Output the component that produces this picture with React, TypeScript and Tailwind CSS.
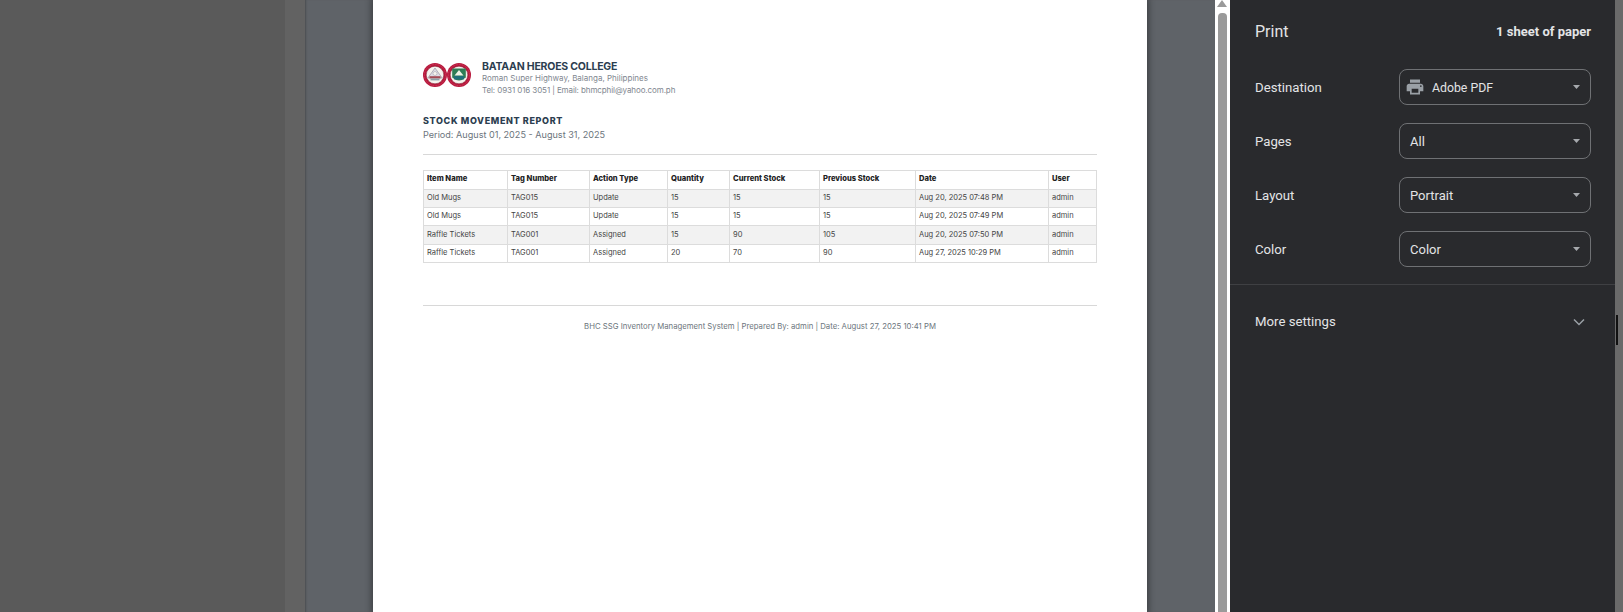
import React from "react";

const rows = [
  ["Old Mugs", "TAG015", "Update", "15", "15", "15", "Aug 20, 2025 07:48 PM", "admin"],
  ["Old Mugs", "TAG015", "Update", "15", "15", "15", "Aug 20, 2025 07:49 PM", "admin"],
  ["Raffle Tickets", "TAG001", "Assigned", "15", "90", "105", "Aug 20, 2025 07:50 PM", "admin"],
  ["Raffle Tickets", "TAG001", "Assigned", "20", "70", "90", "Aug 27, 2025 10:29 PM", "admin"],
];
const heads = ["Item Name", "Tag Number", "Action Type", "Quantity", "Current Stock", "Previous Stock", "Date", "User"];
const rowHeights = ["h-[18px]", "h-[18px]", "h-[19px]", "h-[18px]"];

function Seal({ variant }: { variant: 0 | 1 }) {
  return (
    <svg width="24" height="24" viewBox="0 0 24 24" className="shrink-0">
      <circle cx="12" cy="12" r="12" fill="#b8183c" />
      <circle cx="12" cy="12" r="10.6" fill="none" stroke="#d9677f" strokeWidth="0.5" strokeDasharray="0.8 0.8" />
      <circle cx="12" cy="12" r="8.8" fill="#f6f3ee" stroke="#7d1f30" strokeWidth="0.5" />
      {variant === 0 ? (
        <>
          <path d="M4.8 15 L12 5 L19.2 15 Z" fill="#dedbe4" stroke="#8b8a99" strokeWidth="0.6" />
          <circle cx="12" cy="10.5" r="2" fill="#f6f3ee" stroke="#8a8a99" strokeWidth="0.4" />
          <rect x="6.5" y="13.2" width="11" height="2.2" fill="#a34a55" />
          <rect x="7.5" y="15.6" width="9" height="1.8" fill="#8ba0a8" />
        </>
      ) : (
        <>
          <path d="M5.2 5.6 H18.8 V14.5 Q12 20.5 5.2 14.5 Z" fill="#2e7d55" />
          <path d="M7.5 12.5 L12 7 L16.5 12.5 Z" fill="#eef2e6" />
          <rect x="7" y="13" width="10" height="3.4" fill="#1f6f7a" />
        </>
      )}
    </svg>
  );
}

function Caret() {
  return (
    <svg width="7" height="4" viewBox="0 0 7 4" className="shrink-0">
      <path d="M0 0 H7 L3.5 4 Z" fill="#a6a9ad" />
    </svg>
  );
}

function Setting({ label, value, icon }: { label: string; value: string; icon?: boolean }) {
  return (
    <div className="flex h-[36px] items-center justify-between">
      <span className="pt-[2px] text-[13.2px] text-[#e3e4e6]">{label}</span>
      <div className={`flex h-[36px] w-[192px] items-center rounded-[8px] border border-[#6f7174] pr-[10px] ${icon ? "pl-[5px]" : "pl-[10px]"}`}>
        {icon && (
          <svg width="20" height="20" viewBox="0 0 24 24" className="mr-[7px] shrink-0">
            <path
              d="M19 8H5c-1.66 0-3 1.34-3 3v6h4v4h12v-4h4v-6c0-1.66-1.34-3-3-3zm-3 11H8v-5h8v5zm3-7c-.55 0-1-.45-1-1s.45-1 1-1 1 .45 1 1-.45 1-1 1zm-1-9H6v4h12V3z"
              fill="#9aa0a6"
            />
          </svg>
        )}
        <span className={`flex-1 text-[#e3e4e6] ${icon ? "pt-[3px] text-[12.3px]" : "pt-[1px] text-[13px]"}`}>{value}</span>
        <Caret />
      </div>
    </div>
  );
}

export default function App() {
  return (
    <div className="relative flex h-[612px] w-[1623px] overflow-hidden bg-[#5a5a5a] font-['Roboto',sans-serif]">
      <div className="h-full w-[285px] bg-[#5a5a5a]" />
      <div className="h-full w-[20px] bg-[#626262]" />
      <div className="flex h-full w-[910px] justify-start bg-[#5f6368] pl-[68px] shadow-[inset_2px_0_2px_-1px_#4a4c50]">
        <div className="h-full w-[774px] bg-white px-[50px] pt-[58px] font-['Inter',sans-serif] shadow-[0_0_6px_2px_rgba(0,0,0,0.35)]">
          <div className="flex items-start">
            <div className="mt-[5px] flex">
              <Seal variant={0} />
              <Seal variant={1} />
            </div>
            <div className="ml-[11px]">
              <div className="pt-[3px] text-[10.5px] leading-[11px] font-bold tracking-[-0.02em] text-[#2c3e50]">BATAAN HEROES COLLEGE</div>
              <div className="text-[8px] leading-[12px] text-[#7f8790]">Roman Super Highway, Balanga, Philippines</div>
              <div className="text-[8px] leading-[12px] tracking-[-0.012em] text-[#7f8790]">Tel: 0931 016 3051 | Email: bhmcphil@yahoo.com.ph</div>
            </div>
          </div>
          <div className="mt-[18px] text-[9px] leading-[13px] font-extrabold tracking-[0.07em] text-[#2c3e50]">STOCK MOVEMENT REPORT</div>
          <div className="mt-[1px] text-[9.1px] leading-[14px] text-[#6c757d]">Period: August 01, 2025 - August 31, 2025</div>
          <div className="mt-[12px] h-px w-[674px] bg-[#d8d8d8]" />
          <table className="mt-[15px] w-[674px] table-fixed border-collapse">
            <colgroup>
              <col className="w-[84px]" />
              <col className="w-[82px]" />
              <col className="w-[78px]" />
              <col className="w-[62px]" />
              <col className="w-[90px]" />
              <col className="w-[96px]" />
              <col className="w-[133px]" />
              <col className="w-[48px]" />
            </colgroup>
            <thead>
              <tr className="h-[19px]">
                {heads.map((h) => (
                  <th key={h} className="border border-[#dcdcdc] px-[3px] pt-0 pb-[2px] text-left align-middle text-[7.6px] leading-[10px] font-extrabold text-[#222]">
                    {h}
                  </th>
                ))}
              </tr>
            </thead>
            <tbody>
              {rows.map((r, i) => (
                <tr key={i} className={`${rowHeights[i]} ${i % 2 === 0 ? "bg-[#f2f2f2]" : "bg-white"}`}>
                  {r.map((c, j) => (
                    <td key={j} className={`border border-[#dcdcdc] px-[3px] pt-0 align-middle text-[7.5px] leading-[10px] text-[#444] ${i === 2 ? "pb-0" : "pb-[2px]"}`}>
                      {c}
                    </td>
                  ))}
                </tr>
              ))}
            </tbody>
          </table>
          <div className="mt-[42px] h-px w-[674px] bg-[#d8d8d8]" />
          <div className="mt-[15px] w-[674px] text-center text-[7.75px] leading-[11px] text-[#6c757d]">
            BHC SSG Inventory Management System | Prepared By: admin | Date: August 27, 2025 10:41 PM
          </div>
        </div>
      </div>
      <div className="relative h-full w-[15px] bg-white pt-[13px] pl-[3px]">
        <svg width="10" height="7" viewBox="0 0 10 7" className="absolute top-0 left-[2px]">
          <path d="M5 0 L10 7 H0 Z" fill="#9a9a9a" />
        </svg>
        <div className="h-full w-[9px] rounded-t-[4px] bg-[#9a9a9a]" />
      </div>
      <div className="h-full w-[385px] bg-[#292a2d]">
        <div className="flex items-center justify-between pt-[21px] pr-[24px] pl-[25px]">
          <span className="text-[16px] leading-[22px] text-[#e3e4e6]">Print</span>
          <span className="text-[13px] leading-[22px] font-bold text-[#e3e4e6]">1 sheet of paper</span>
        </div>
        <div className="mt-[26px] flex flex-col gap-[18px] pr-[24px] pl-[25px]">
          <Setting label="Destination" value="Adobe PDF" icon />
          <Setting label="Pages" value="All" />
          <Setting label="Layout" value="Portrait" />
          <Setting label="Color" value="Color" />
        </div>
        <div className="mt-[17px] h-px w-full bg-[#3f4043]" />
        <div className="mt-[26px] flex items-center justify-between pr-[30px] pl-[25px]">
          <span className="pt-[1px] text-[13.2px] leading-[20px] text-[#e3e4e6]">More settings</span>
          <svg width="12" height="8" viewBox="0 0 12 8" className="shrink-0">
            <path d="M1 1.5 L6 6.5 L11 1.5" fill="none" stroke="#9aa0a6" strokeWidth="1.5" />
          </svg>
        </div>
      </div>
      <div className="h-full w-[8px] bg-[#6a6a6a]" />
      <div className="absolute top-[315px] left-[1616px] h-[30px] w-[2px] bg-[#111]" />
    </div>
  );
}
